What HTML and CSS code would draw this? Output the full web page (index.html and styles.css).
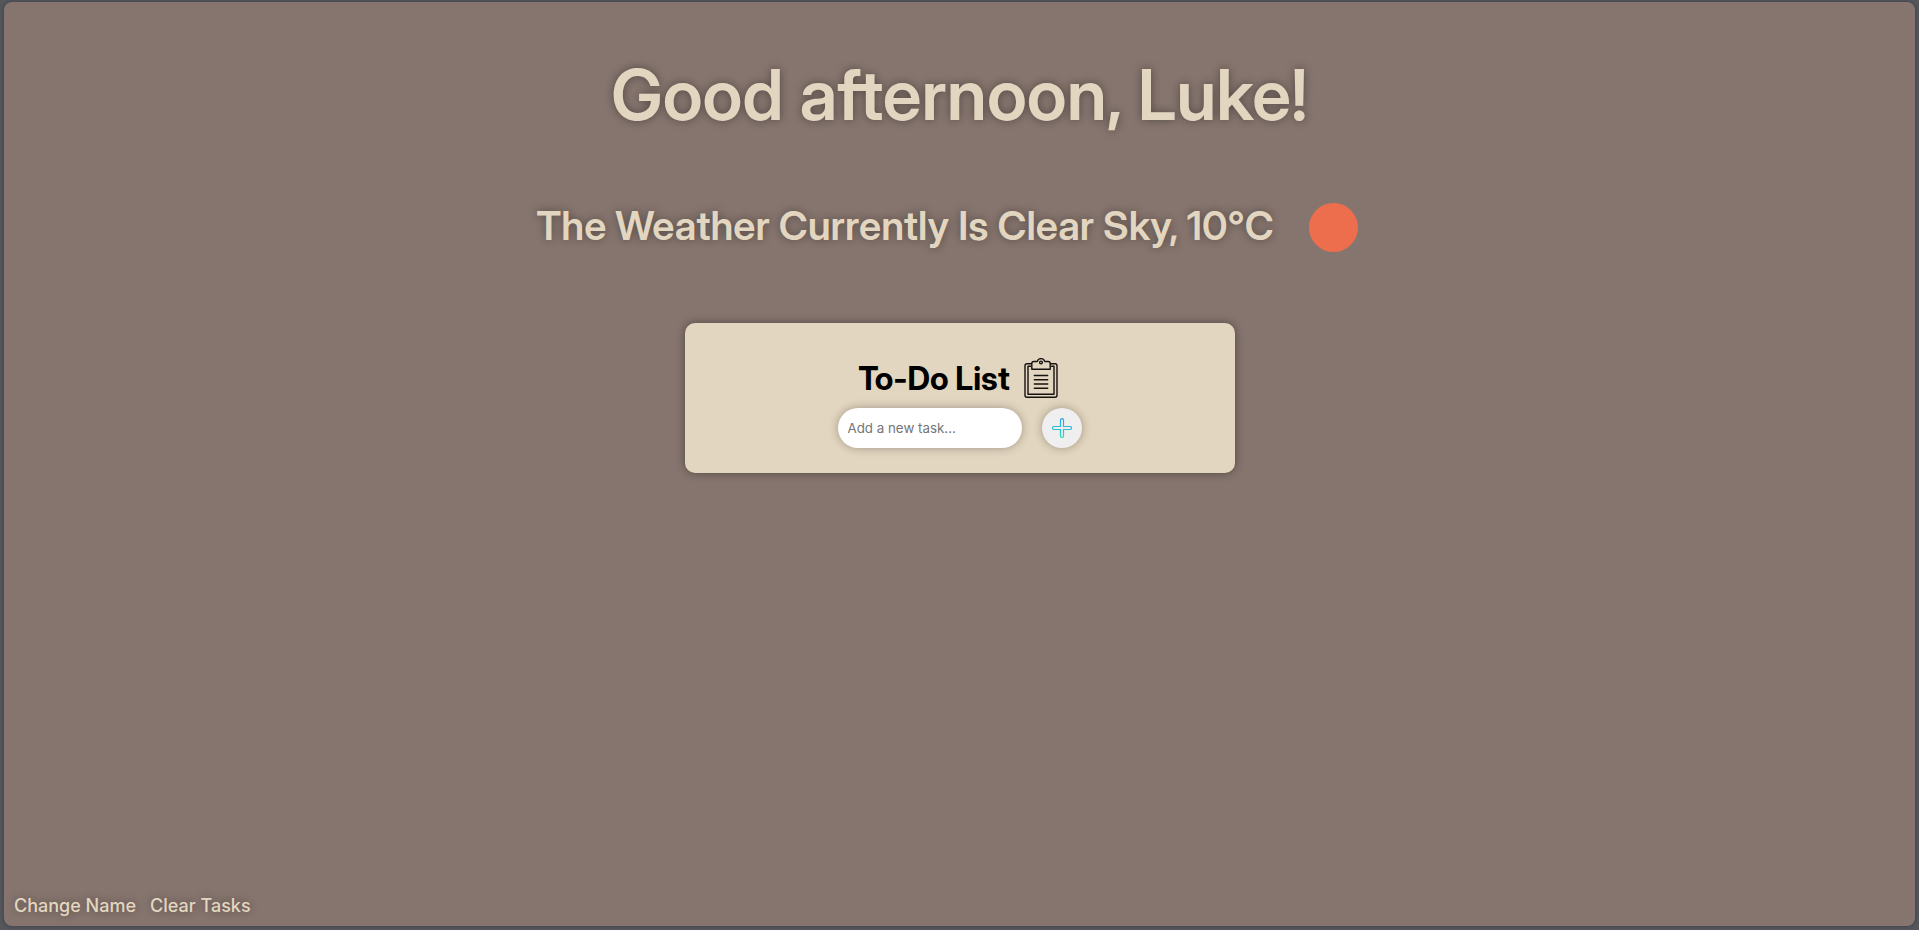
FILE: index.html
```html
<!DOCTYPE html>
<html lang="en">
<head>
<meta charset="utf-8">
<title>Dashboard</title>
<link rel="stylesheet" href="styles.css">
</head>
<body>
<main class="panel">
  <h1 class="greeting">Good afternoon, Luke!</h1>
  <div class="weather">
    <h2 class="weather-text">The Weather Currently Is Clear Sky, 10°C</h2>
    <svg class="weather-icon" viewBox="0 0 100 100" aria-hidden="true"><circle cx="50.5" cy="50.5" r="24.5" fill="#ec6e4c"/></svg>
  </div>
  <section class="card">
    <div class="card-head">
      <h3 class="card-title">To-Do List</h3>
      <svg class="clipboard" viewBox="0 0 40 40" fill="none" stroke="#17120f" stroke-width="1.4" stroke-linejoin="round" stroke-linecap="round" aria-hidden="true">
        <path d="M10.500 5.800H6a2 2 0 0 0-2 2v29.500a2 2 0 0 0 2 2h28a2 2 0 0 0 2-2V7.800a2 2 0 0 0-2-2h-4.500"/>
        <path d="M9.500 8.300H7v28h26v-28h-2.500"/>
        <path d="M10.800 11.200V5.500a2 2 0 0 1 2-2h3.400c.6-1.700 1.900-2.900 3.800-2.900s3.200 1.200 3.800 2.900h3.400a2 2 0 0 1 2 2v5.700z"/>
        <circle cx="20" cy="4.500" r="1.400"/>
        <path d="M13.300 17.500h13.400M13.300 21.800h13.400M13.300 26h13.400M13.300 30.300h13.400"/>
      </svg>
    </div>
    <form class="task-form">
      <input class="task-input" type="text" placeholder="Add a new task..." aria-label="New task">
      <button class="add-button" type="button" aria-label="Add task">
        <svg class="plus" viewBox="0 0 20 20" fill="none" aria-hidden="true">
          <defs><linearGradient id="plus-ink" x1="0" y1="0" x2="0" y2="1"><stop offset="0" stop-color="#2f9df4"/><stop offset="1" stop-color="#2bdcb4"/></linearGradient></defs>
          <path stroke="url(#plus-ink)" stroke-width="1.200" d="M10 .6A1.500 1.500 0 0 1 11.500 2v6.500H18a1.500 1.500 0 0 1 0 3h-6.500V18a1.500 1.500 0 0 1-3 0v-6.500H2a1.500 1.500 0 0 1 0-3h6.500V2A1.500 1.500 0 0 1 10 .6z"/>
        </svg>
      </button>
    </form>
  </section>
  <footer class="actions">
    <button class="action" type="button">Change Name</button>
    <button class="action" type="button">Clear Tasks</button>
  </footer>
</main>
</body>
</html>
```
FILE: styles.css
```css
* {
  box-sizing: border-box;
}

body {
  margin: 0;
  min-height: 100vh;
  display: flex;
  padding: 2px 4px 4px;
  background: #56575d;
  font-family: Inter, "Liberation Sans", sans-serif;
}

.panel {
  flex: 1;
  display: flex;
  flex-direction: column;
  align-items: center;
  background: #86756e;
  border-radius: 8px;
  box-shadow: 0 0 4px rgba(0, 0, 0, 0.3);
}

.greeting,
.weather-text,
.card-title {
  margin: 0;
  font-family: "Inter Display", Inter, sans-serif;
}

.greeting {
  margin-top: 50px;
  font-size: 70px;
  line-height: 86px;
  font-weight: 600;
  color: #e3d6c0;
  text-shadow: 0 0 10px rgba(0, 0, 0, 0.4);
}

.weather {
  margin-top: 39px;
  display: flex;
  align-items: center;
  gap: 9px;
  color: #e3d6c0;
}

.weather-text {
  padding-bottom: 2px;
  font-size: 40px;
  line-height: 48px;
  font-weight: 600;
  text-shadow: 0 0 10px rgba(0, 0, 0, 0.4);
}

.weather-icon {
  width: 100px;
  height: 100px;
}

.card {
  width: 550px;
  max-width: 100%;
  margin-top: 46px;
  padding: 35px 20px 25px;
  background: #e3d6c0;
  border-radius: 10px;
  box-shadow: 0 0 10px rgba(0, 0, 0, 0.4);
}

.card-head {
  display: flex;
  justify-content: center;
  align-items: flex-end;
  gap: 11px;
}

.card-title {
  font-size: 32px;
  line-height: 38px;
  font-weight: 700;
  color: #000;
}

.clipboard {
  width: 40px;
  height: 40px;
}

.task-form {
  margin-top: 10px;
  display: flex;
  justify-content: center;
  gap: 20px;
}

.task-input {
  width: 184px;
  height: 40px;
  padding: 0 10px;
  border: 0;
  border-radius: 20px;
  background: #fff;
  font-family: Inter, sans-serif;
  box-shadow: 0 0 10px rgba(0, 0, 0, 0.3);
}

.task-input::placeholder {
  color: #757575;
}

.add-button {
  width: 40px;
  height: 40px;
  padding: 0;
  display: grid;
  place-items: center;
  border: 0;
  border-radius: 50%;
  background: #efefef;
  box-shadow: 0 0 10px rgba(0, 0, 0, 0.3);
}

.plus {
  width: 20px;
  height: 20px;
}

.actions {
  align-self: stretch;
  margin-top: auto;
  padding: 8px 10px;
  display: flex;
  gap: 14px;
}

.action {
  padding: 0;
  border: 0;
  background: none;
  font: 500 18px/24px Inter, sans-serif;
  color: #e3d6c0;
  text-shadow: 0 0 10px rgba(0, 0, 0, 0.4);
}
```
